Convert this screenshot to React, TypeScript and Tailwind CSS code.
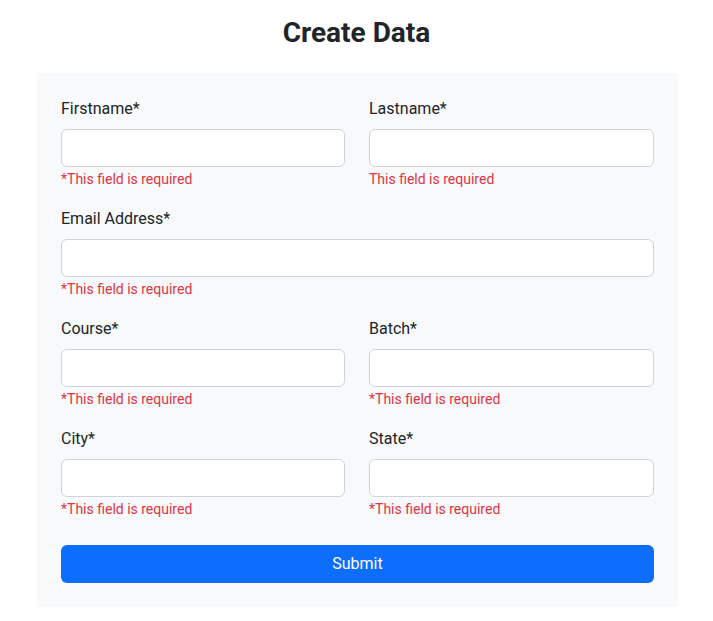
const rows: { name: string; error: string }[][] = [
  [
    { name: 'Firstname*', error: '*This field is required' },
    { name: 'Lastname*', error: 'This field is required' },
  ],
  [{ name: 'Email Address*', error: '*This field is required' }],
  [
    { name: 'Course*', error: '*This field is required' },
    { name: 'Batch*', error: '*This field is required' },
  ],
  [
    { name: 'City*', error: '*This field is required' },
    { name: 'State*', error: '*This field is required' },
  ],
];

function Field({ name, error }: { name: string; error: string }) {
  return (
    <div>
      <label className="block text-base leading-6 text-[#212529] mb-2">{name}</label>
      <input
        type="text"
        className="block w-full h-[38px] rounded-[6px] border border-[#ced4da] bg-white px-3 outline-none"
      />
      <div className="mt-[2px] text-sm leading-[21px] text-[#dc3545]">{error}</div>
    </div>
  );
}

export default function App() {
  return (
    <div className="min-h-screen bg-white font-['Roboto',sans-serif]">
      <h3 className="pt-4 text-center text-[28px] font-bold leading-[1.2] text-[#212529] mb-[23px]">
        Create Data
      </h3>
      <form className="ml-[37px] w-[641px] bg-[#f8f9fa] p-6 flex flex-col">
        {rows.map((row, i) => (
          <div
            key={i}
            className={
              row.length > 1
                ? 'grid grid-cols-[284px_1fr] gap-6 mb-[17px]'
                : 'grid grid-cols-1 mb-[17px]'
            }
          >
            {row.map((f) => (
              <Field key={f.name} name={f.name} error={f.error} />
            ))}
          </div>
        ))}
        <button
          type="button"
          className="mt-2 block w-full h-[38px] rounded-[6px] bg-[#0d6efd] text-base text-white"
        >
          Submit
        </button>
      </form>
    </div>
  );
}
